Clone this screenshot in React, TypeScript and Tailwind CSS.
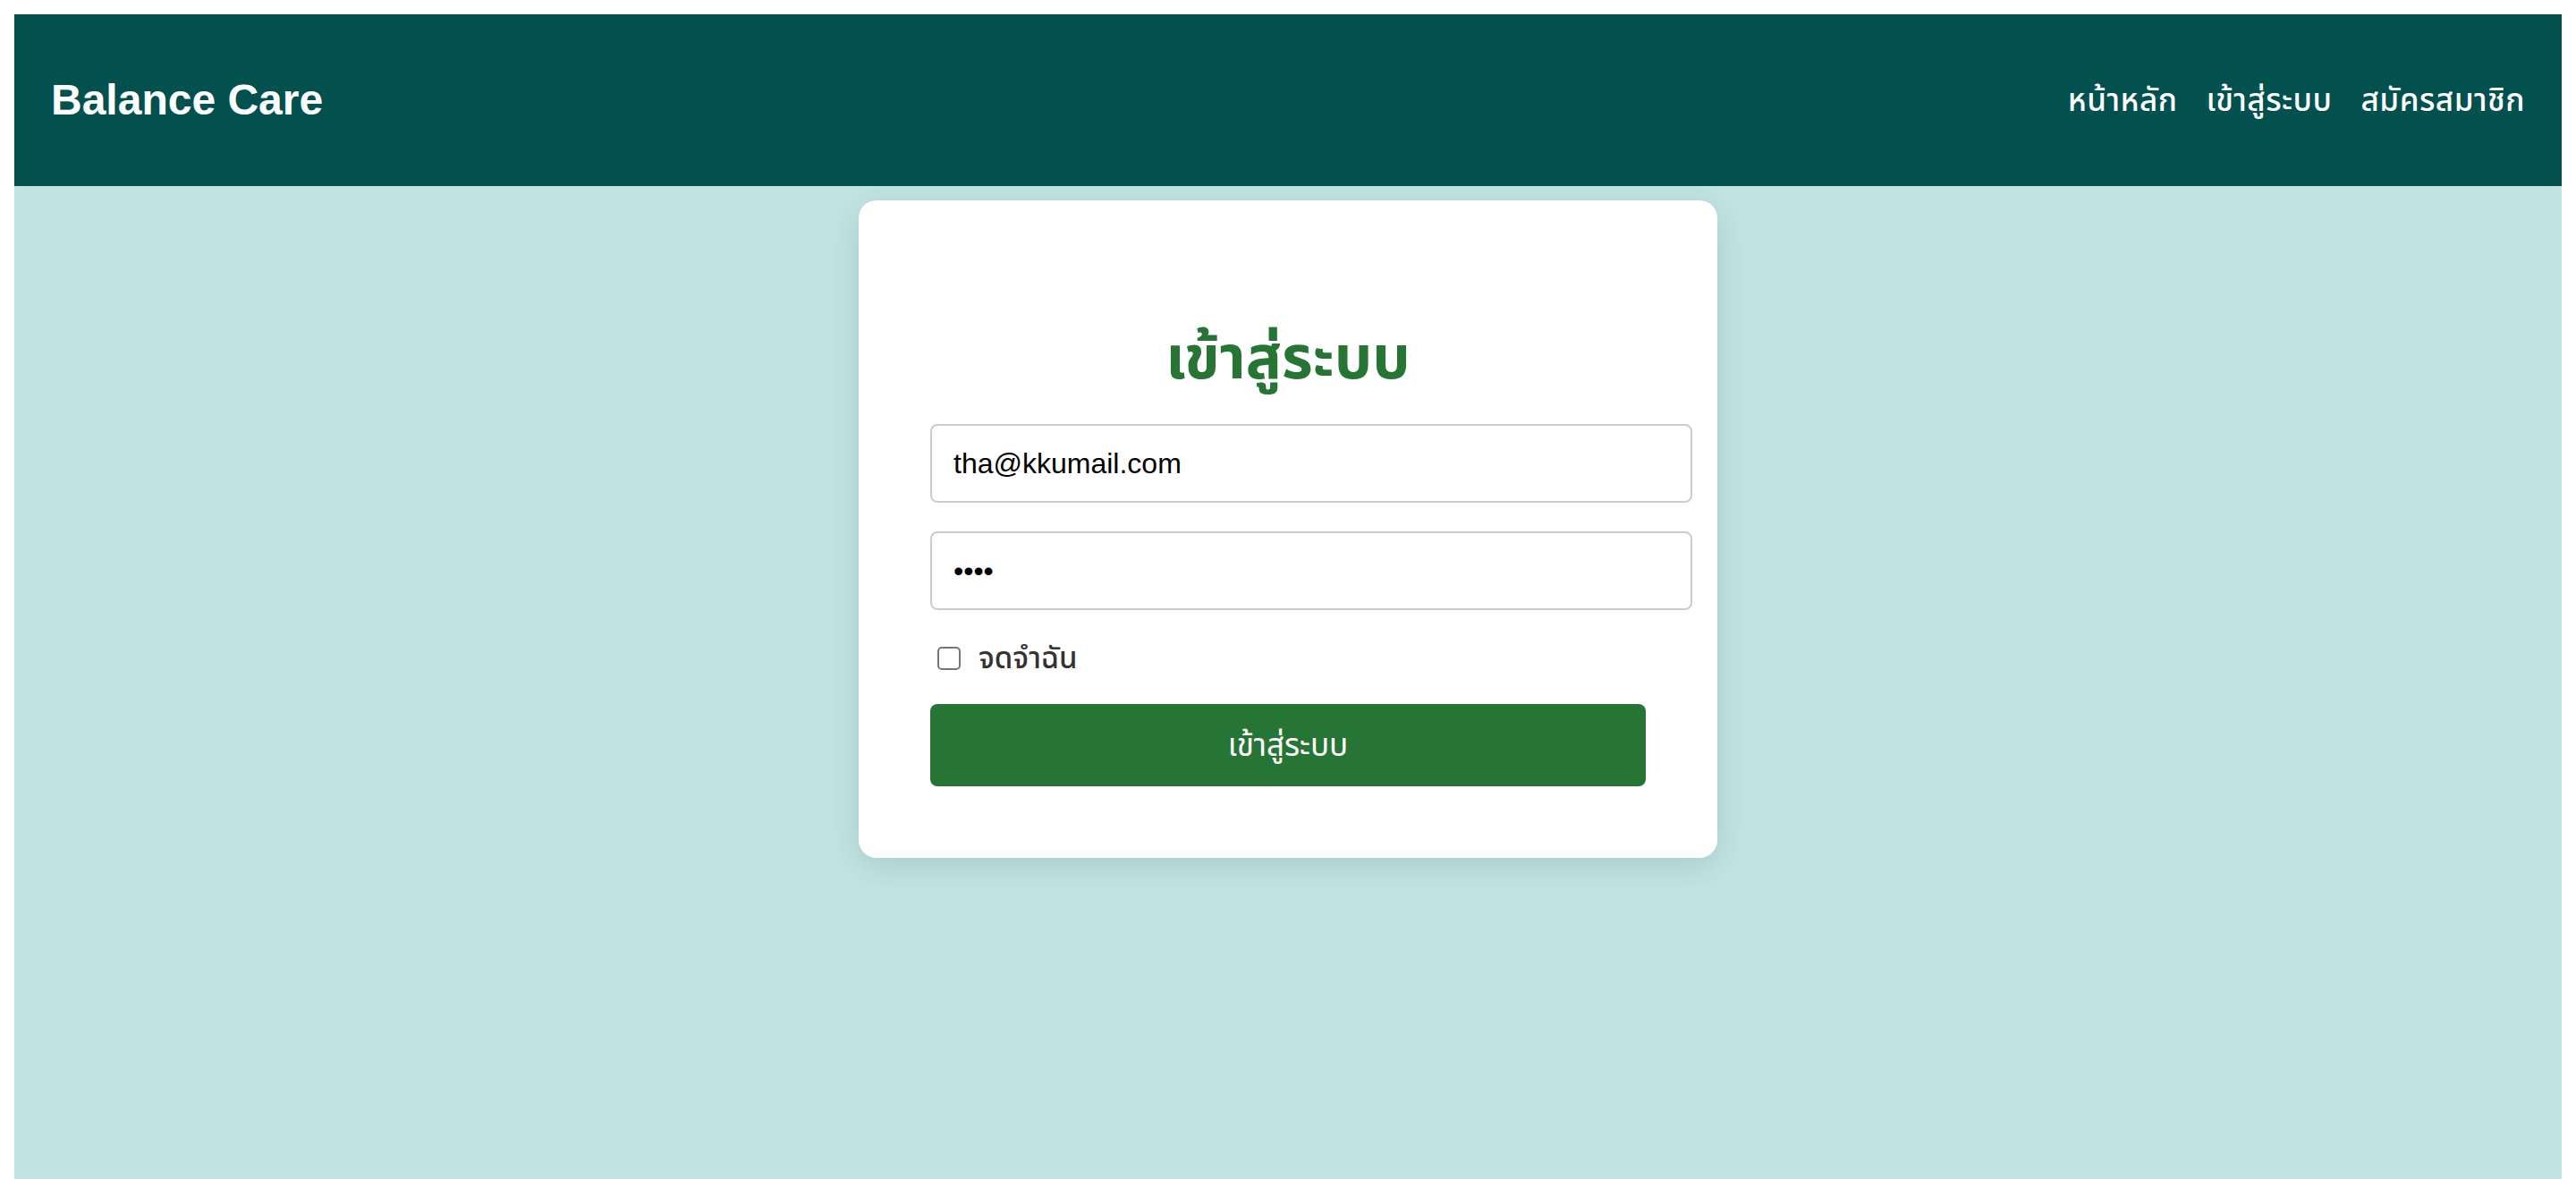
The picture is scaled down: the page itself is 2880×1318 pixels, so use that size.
import { useState } from 'react';

const thai = '"Liberation Sans", "Noto Sans Thai", "Noto Sans Thai Looped", "Loma", "Garuda", "Norasi", "Tlwg Typo", sans-serif';

export default function App() {
  const [email, setEmail] = useState('tha@kkumail.com');
  const [password, setPassword] = useState('1234');
  const [remember, setRemember] = useState(false);

  return (
    <div className="min-h-screen bg-white px-[16px] pt-[16px]" style={{ fontFamily: thai }}>
      <div className="min-h-[1302px] bg-[#c2e4e3]">
        {/* header */}
        <header className="flex h-[192px] items-center justify-between bg-[#02514f] px-[41px]">
          <h1 className="text-[48px] font-bold text-white">Balance Care</h1>
          <nav className="flex gap-[32px] text-[35px] font-medium tracking-[0.5px] text-white">
            <a href="#">หน้าหลัก</a>
            <a href="#">เข้าสู่ระบบ</a>
            <a href="#">สมัครสมาชิก</a>
          </nav>
        </header>

        {/* login card */}
        <div className="mx-auto mt-[16px] w-[960px] rounded-[20px] bg-white px-[80px] py-[80px] shadow-[0_8px_36px_rgba(0,60,60,0.14)]">
          <h2 className="mt-[48px] mb-[26px] text-center text-[67px] font-bold leading-[96px] text-[#277535]">
            เข้าสู่ระบบ
          </h2>
          <form className="flex flex-col" onSubmit={(e) => e.preventDefault()}>
            <input
              type="email"
              value={email}
              onChange={(e) => setEmail(e.target.value)}
              className="box-border h-[88px] w-[852px] rounded-[8px] border-2 border-[#cccccc] px-[24px] text-[32px] text-black outline-none"
              style={{ fontFamily: '"Liberation Sans", Arial, sans-serif' }}
            />
            <input
              type="password"
              value={password}
              onChange={(e) => setPassword(e.target.value)}
              className="mt-[32px] box-border h-[88px] w-[852px] rounded-[8px] border-2 border-[#cccccc] px-[24px] text-[32px] text-black outline-none"
              style={{ fontFamily: '"Liberation Sans", Arial, sans-serif' }}
            />
            <label className="mt-[28px] flex h-[52px] items-center text-[33px] font-medium text-[#333333]">
              <input
                type="checkbox"
                checked={remember}
                onChange={(e) => setRemember(e.target.checked)}
                className="ml-[8px] mr-[20px] h-[26px] w-[26px] appearance-none rounded-[5px] border-2 border-[#767676] bg-white"
              />
              จดจำฉัน
            </label>
            <button
              type="submit"
              className="mt-[25px] h-[92px] w-[800px] rounded-[8px] bg-[#277535] text-[35px] text-white"
            >
              เข้าสู่ระบบ
            </button>
          </form>
        </div>
      </div>
    </div>
  );
}
